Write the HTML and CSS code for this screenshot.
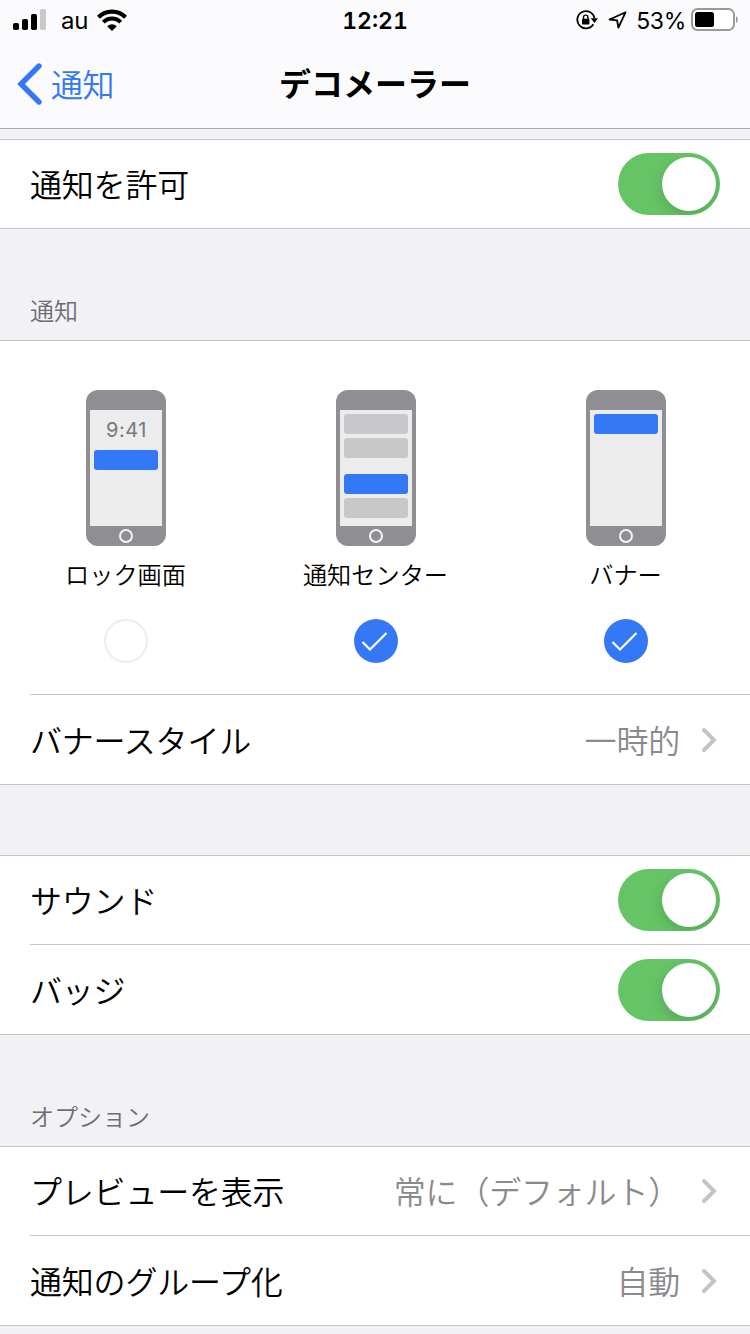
FILE: index.html
```
<!DOCTYPE html>
<html lang="ja">
<head>
    <meta charset="UTF-8">
    <meta name="viewport" content="width=device-width, initial-scale=1.0">
    <title>デコメーラー</title>
    <link rel="stylesheet" href="styles.css">
</head>
<body>
    <header class="top">
        <div class="status-bar">
            <div class="status-left">
                <svg class="signal" width="34" height="22" viewBox="0 0 34 22">
                    <rect x="0" y="14" width="6" height="7" rx="1.8"/>
                    <rect x="9" y="10" width="6" height="11" rx="1.8"/>
                    <rect x="18" y="5" width="6" height="16" rx="1.8"/>
                    <rect x="27" y="0" width="6" height="21" rx="1.8" fill="#c8c8ca"/>
                </svg>
                <span class="carrier">au</span>
                <svg class="wifi" width="30" height="22" viewBox="0 0 30 22">
                    <path d="M1.5 8.2 A19 19 0 0 1 28.5 8.2" fill="none" stroke="#000" stroke-width="4.2"/>
                    <path d="M6.3 13.2 A12.2 12.2 0 0 1 23.7 13.2" fill="none" stroke="#000" stroke-width="4"/>
                    <path d="M15 22 L10.2 17.3 A6.8 6.8 0 0 1 19.8 17.3 Z"/>
                </svg>
            </div>
            <span class="clock">12:21</span>
            <div class="status-right">
                <svg class="lock" width="22" height="20" viewBox="0 0 22 20">
                    <path d="M17.3 14.2 A8.6 8.6 0 1 1 18.4 8.2" fill="none" stroke="#000" stroke-width="1.8"/>
                    <path d="M14.8 8.2 H22 L18.4 13 Z"/>
                    <rect x="6" y="8.8" width="7.4" height="5.8" rx="0.8"/>
                    <path d="M7.5 9 V7.3 a2.2 2.2 0 0 1 4.4 0 V9" fill="none" stroke="#000" stroke-width="1.4"/>
                </svg>
                <svg class="location" width="19" height="18" viewBox="0 0 19 18">
                    <path d="M17.6 1.2 L1.6 8.5 L9.1 9.3 L10.4 16.6 Z" fill="none" stroke="#000" stroke-width="1.8" stroke-linejoin="round"/>
                </svg>
                <span class="percent">53%</span>
                <svg class="battery" width="48" height="24" viewBox="0 0 48 24">
                    <rect x="1" y="1" width="42" height="21" rx="5.5" fill="#fff" stroke="#9a9a9b" stroke-width="2"/>
                    <rect x="4" y="4" width="19" height="15" rx="2.5"/>
                    <path d="M45 8 a4.2 4.2 0 0 1 0 7 Z" fill="#9a9a9b"/>
                </svg>
            </div>
        </div>
        <nav class="nav-bar">
            <a class="back">
                <svg width="26" height="44" viewBox="0 0 26 44">
                    <path d="M22 4 L4 22 L22 40" fill="none" stroke="#3478f6" stroke-width="5.4" stroke-linecap="round"/>
                </svg>
                <span class="back-text">通知</span>
            </a>
            <h1 class="title">デコメーラー</h1>
        </nav>
    </header>

    <main class="settings">
        <section class="group">
            <div class="row">
                <span class="label">通知を許可</span>
                <span class="toggle"></span>
            </div>
        </section>

        <h2 class="section-title">通知</h2>
        <section class="group">
            <div class="picker">
                <div class="option">
                    <div class="phone">
                        <div class="screen">
                            <span class="phone-time">9:41</span>
                            <span class="bar active"></span>
                        </div>
                        <span class="home"></span>
                    </div>
                    <span class="option-name">ロック画面</span>
                    <span class="check"></span>
                </div>
                <div class="option">
                    <div class="phone">
                        <div class="screen">
                            <span class="bar"></span>
                            <span class="bar"></span>
                            <span class="bar active spaced"></span>
                            <span class="bar"></span>
                        </div>
                        <span class="home"></span>
                    </div>
                    <span class="option-name">通知センター</span>
                    <span class="check checked">
                        <svg width="44" height="44" viewBox="0 0 44 44">
                            <path d="M8.5 23 L16 30.5 L32.5 14" fill="none" stroke="#fff" stroke-width="2.2"/>
                        </svg>
                    </span>
                </div>
                <div class="option">
                    <div class="phone">
                        <div class="screen">
                            <span class="bar active"></span>
                        </div>
                        <span class="home"></span>
                    </div>
                    <span class="option-name">バナー</span>
                    <span class="check checked">
                        <svg width="44" height="44" viewBox="0 0 44 44">
                            <path d="M8.5 23 L16 30.5 L32.5 14" fill="none" stroke="#fff" stroke-width="2.2"/>
                        </svg>
                    </span>
                </div>
            </div>
            <div class="row">
                <span class="label">バナースタイル</span>
                <span class="value">一時的</span>
                <svg class="chevron" width="16" height="26" viewBox="0 0 16 26">
                    <path d="M3 3 L13 13 L3 23" fill="none" stroke="#c4c4c6" stroke-width="4" stroke-linecap="round"/>
                </svg>
            </div>
        </section>

        <section class="group spaced-group">
            <div class="row">
                <span class="label">サウンド</span>
                <span class="toggle"></span>
            </div>
            <div class="row">
                <span class="label">バッジ</span>
                <span class="toggle"></span>
            </div>
        </section>

        <h2 class="section-title">オプション</h2>
        <section class="group">
            <div class="row">
                <span class="label">プレビューを表示</span>
                <span class="value">常に（デフォルト）</span>
                <svg class="chevron" width="16" height="26" viewBox="0 0 16 26">
                    <path d="M3 3 L13 13 L3 23" fill="none" stroke="#c4c4c6" stroke-width="4" stroke-linecap="round"/>
                </svg>
            </div>
            <div class="row">
                <span class="label">通知のグループ化</span>
                <span class="value">自動</span>
                <svg class="chevron" width="16" height="26" viewBox="0 0 16 26">
                    <path d="M3 3 L13 13 L3 23" fill="none" stroke="#c4c4c6" stroke-width="4" stroke-linecap="round"/>
                </svg>
            </div>
        </section>
    </main>
</body>
</html>
```
FILE: styles.css
```
:root {
    --blue: #3478f6;
    --green: #65c466;
    --line: #c6c6c8;
    --bg: #f2f1f6;
}

* {
    box-sizing: border-box;
}

body {
    margin: 0;
    height: 1334px;
    overflow: hidden;
    background: var(--bg);
    color: #000;
    font-family: Inter, "Noto Sans CJK JP", sans-serif;
    font-weight: 350;
}

svg {
    display: block;
    flex: none;
}

/* status bar + navigation */
.top {
    height: 129px;
    background: #fbfbfd;
    border-bottom: 1px solid #a9a9b2;
}

.status-bar {
    display: grid;
    grid-template-columns: 1fr auto 1fr;
    align-items: center;
    height: 40px;
    padding: 0 11px 0 13px;
    font-size: 24px;
    font-weight: 400;
}

.status-left,
.status-right {
    display: flex;
    align-items: center;
}

.status-right {
    justify-content: flex-end;
}

.carrier {
    margin: 1px 9px 0 14px;
    letter-spacing: -0.3px;
}

.clock {
    font-size: 23px;
    font-weight: 600;
    font-variant-numeric: tabular-nums;
    padding: 2px 2px 0 0;
}

.location {
    margin-left: 10px;
}

.percent {
    margin: 1px 5px 0 9px;
    font-size: 23px;
    letter-spacing: -0.3px;
}

.nav-bar {
    display: grid;
    grid-template-columns: 1fr auto 1fr;
    align-items: center;
    height: 88px;
}

.back {
    display: flex;
    align-items: center;
    gap: 8px;
    padding-left: 17px;
    color: var(--blue);
    font-size: 32px;
    letter-spacing: -0.5px;
}

.back-text {
    padding-bottom: 3px;
}

.title {
    margin: 0;
    padding-top: 2px;
    font-size: 32px;
    font-weight: 700;
    line-height: 48px;
}

/* grouped list */
.settings {
    padding-top: 10px;
}

.group {
    background: #fff;
    border-top: 1px solid var(--line);
    border-bottom: 1px solid var(--line);
}

.spaced-group {
    margin-top: 70px;
}

.section-title {
    display: flex;
    align-items: flex-end;
    height: 111px;
    margin: 0;
    padding: 0 30px 10px;
    color: #6d6d72;
    font-size: 24px;
    font-weight: 350;
    line-height: 36px;
}

.row {
    display: flex;
    align-items: center;
    height: 88px;
    margin-left: 30px;
    padding-right: 30px;
    font-size: 32px;
    letter-spacing: -0.2px;
}

.row + .row,
.picker + .row {
    height: 90px;
    border-top: 1px solid var(--line);
}

.label {
    flex: 1;
    padding-bottom: 2px;
}

.value {
    padding-bottom: 2px;
    color: #8a8a8e;
}

.chevron {
    margin: 0 3px 0 21px;
}

.toggle {
    display: flex;
    justify-content: flex-end;
    width: 102px;
    height: 62px;
    padding: 4px;
    border-radius: 31px;
    background: var(--green);
    overflow: hidden;
}

.toggle::after {
    content: "";
    width: 54px;
    height: 54px;
    border-radius: 50%;
    background: #fff;
    box-shadow: 0 5px 14px rgba(0, 0, 0, 0.15);
}

/* alert style picker */
.picker {
    display: grid;
    grid-template-columns: repeat(3, 1fr);
    height: 353px;
    padding-top: 49px;
}

.option {
    display: flex;
    flex-direction: column;
    align-items: center;
    padding-left: 1px;
}

.phone {
    display: flex;
    flex-direction: column;
    align-items: center;
    width: 80px;
    height: 156px;
    padding: 20px 4px 0;
    border-radius: 12px;
    background: #8e8e93;
}

.screen {
    display: flex;
    flex-direction: column;
    gap: 4px;
    width: 72px;
    height: 116px;
    padding: 4px;
    background: #ececec;
}

.phone-time {
    height: 32px;
    padding-left: 2px;
    color: #77777a;
    font-size: 20px;
    font-weight: 400;
    letter-spacing: 0.5px;
    line-height: 32px;
    text-align: center;
}

.bar {
    height: 20px;
    border-radius: 3px;
    background: #c8c8ca;
}

.bar.active {
    background: var(--blue);
}

.bar.spaced {
    margin-top: 12px;
}

.home {
    width: 14px;
    height: 14px;
    margin-top: 3px;
    border: 2px solid #f4f4f4;
    border-radius: 50%;
}

.option-name {
    margin-top: 12px;
    font-size: 24.2px;
    line-height: 36px;
}

.check {
    width: 44px;
    height: 44px;
    margin-top: 25px;
    border: 2px solid #ececec;
    border-radius: 50%;
}

.check.checked {
    border: 0;
    background: var(--blue);
}
```
